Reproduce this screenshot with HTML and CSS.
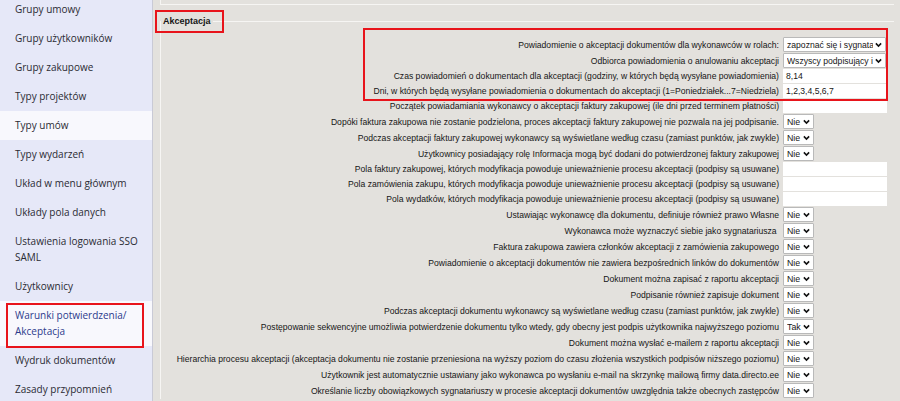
FILE: index.html
```html
<!DOCTYPE html>
<html lang="pl">
<head>
<meta charset="utf-8">
<title>Akceptacja</title>
<link rel="stylesheet" href="styles.css">
</head>
<body>
<div class="app">
  <nav class="side">
    <a class="side-item">Grupy umowy</a>
    <a class="side-item">Grupy użytkowników</a>
    <a class="side-item">Grupy zakupowe</a>
    <a class="side-item">Typy projektów</a>
    <a class="side-item is-hover">Typy umów</a>
    <a class="side-item">Typy wydarzeń</a>
    <a class="side-item">Układ w menu głównym</a>
    <a class="side-item">Układy pola danych</a>
    <a class="side-item">Ustawienia logowania SSO SAML</a>
    <a class="side-item">Użytkownicy</a>
    <a class="side-item is-active">Warunki potwierdzenia/ Akceptacja</a>
    <a class="side-item">Wydruk dokumentów</a>
    <a class="side-item">Zasady przypomnień</a>
  </nav>
  <main class="content">
    <div class="prev-box"></div>
    <fieldset class="group">
      <legend class="group-title"><span class="marked">Akceptacja</span></legend>
      <div class="mark-box"></div>
      <table class="settings">
        <tr><td class="lbl">Powiadomienie o akceptacji dokumentów dla wykonawców w rolach:</td><td class="ctl"><span class="sel wide"><span class="val">zapoznać się i sygnata</span><svg class="chev" viewBox="0 0 8 6"><path d="M1 1.2 L4 4.2 L7 1.2"/></svg></span></td></tr>
        <tr><td class="lbl">Odbiorca powiadomienia o anulowaniu akceptacji</td><td class="ctl"><span class="sel wide"><span class="val">Wszyscy podpisujący i</span><svg class="chev" viewBox="0 0 8 6"><path d="M1 1.2 L4 4.2 L7 1.2"/></svg></span></td></tr>
        <tr><td class="lbl">Czas powiadomień o dokumentach dla akceptacji (godziny, w których będą wysyłane powiadomienia)</td><td class="ctl"><span class="txt">8,14</span></td></tr>
        <tr><td class="lbl">Dni, w których będą wysyłane powiadomienia o dokumentach do akceptacji (1=Poniedziałek...7=Niedziela)</td><td class="ctl"><span class="txt">1,2,3,4,5,6,7</span></td></tr>
        <tr><td class="lbl">Początek powiadamiania wykonawcy o akceptacji faktury zakupowej (ile dni przed terminem płatności)</td><td class="ctl"><span class="txt"></span></td></tr>
        <tr><td class="lbl">Dopóki faktura zakupowa nie zostanie podzielona, proces akceptacji faktury zakupowej nie pozwala na jej podpisanie.</td><td class="ctl"><span class="sel"><span class="val">Nie</span><svg class="chev" viewBox="0 0 8 6"><path d="M1 1.2 L4 4.2 L7 1.2"/></svg></span></td></tr>
        <tr><td class="lbl">Podczas akceptacji faktury zakupowej wykonawcy są wyświetlane według czasu (zamiast punktów, jak zwykle)</td><td class="ctl"><span class="sel"><span class="val">Nie</span><svg class="chev" viewBox="0 0 8 6"><path d="M1 1.2 L4 4.2 L7 1.2"/></svg></span></td></tr>
        <tr><td class="lbl">Użytkownicy posiadający rolę Informacja mogą być dodani do potwierdzonej faktury zakupowej</td><td class="ctl"><span class="sel"><span class="val">Nie</span><svg class="chev" viewBox="0 0 8 6"><path d="M1 1.2 L4 4.2 L7 1.2"/></svg></span></td></tr>
        <tr><td class="lbl">Pola faktury zakupowej, których modyfikacja powoduje unieważnienie procesu akceptacji (podpisy są usuwane)</td><td class="ctl"><span class="txt"></span></td></tr>
        <tr><td class="lbl">Pola zamówienia zakupu, których modyfikacja powoduje unieważnienie procesu akceptacji (podpisy są usuwane)</td><td class="ctl"><span class="txt"></span></td></tr>
        <tr><td class="lbl">Pola wydatków, których modyfikacja powoduje unieważnienie procesu akceptacji (podpisy są usuwane)</td><td class="ctl"><span class="txt"></span></td></tr>
        <tr><td class="lbl">Ustawiając wykonawcę dla dokumentu, definiuje również prawo Własne</td><td class="ctl"><span class="sel"><span class="val">Nie</span><svg class="chev" viewBox="0 0 8 6"><path d="M1 1.2 L4 4.2 L7 1.2"/></svg></span></td></tr>
        <tr><td class="lbl">Wykonawca może wyznaczyć siebie jako sygnatariusza&nbsp;</td><td class="ctl"><span class="sel"><span class="val">Nie</span><svg class="chev" viewBox="0 0 8 6"><path d="M1 1.2 L4 4.2 L7 1.2"/></svg></span></td></tr>
        <tr><td class="lbl">Faktura zakupowa zawiera członków akceptacji z zamówienia zakupowego</td><td class="ctl"><span class="sel"><span class="val">Nie</span><svg class="chev" viewBox="0 0 8 6"><path d="M1 1.2 L4 4.2 L7 1.2"/></svg></span></td></tr>
        <tr><td class="lbl">Powiadomienie o akceptacji dokumentów nie zawiera bezpośrednich linków do dokumentów</td><td class="ctl"><span class="sel"><span class="val">Nie</span><svg class="chev" viewBox="0 0 8 6"><path d="M1 1.2 L4 4.2 L7 1.2"/></svg></span></td></tr>
        <tr><td class="lbl">Dokument można zapisać z raportu akceptacji</td><td class="ctl"><span class="sel"><span class="val">Nie</span><svg class="chev" viewBox="0 0 8 6"><path d="M1 1.2 L4 4.2 L7 1.2"/></svg></span></td></tr>
        <tr><td class="lbl">Podpisanie również zapisuje dokument</td><td class="ctl"><span class="sel"><span class="val">Nie</span><svg class="chev" viewBox="0 0 8 6"><path d="M1 1.2 L4 4.2 L7 1.2"/></svg></span></td></tr>
        <tr><td class="lbl">Podczas akceptacji dokumentu wykonawcy są wyświetlane według czasu (zamiast punktów, jak zwykle)</td><td class="ctl"><span class="sel"><span class="val">Nie</span><svg class="chev" viewBox="0 0 8 6"><path d="M1 1.2 L4 4.2 L7 1.2"/></svg></span></td></tr>
        <tr><td class="lbl">Postępowanie sekwencyjne umożliwia potwierdzenie dokumentu tylko wtedy, gdy obecny jest podpis użytkownika najwyższego poziomu</td><td class="ctl"><span class="sel"><span class="val">Tak</span><svg class="chev" viewBox="0 0 8 6"><path d="M1 1.2 L4 4.2 L7 1.2"/></svg></span></td></tr>
        <tr><td class="lbl">Dokument można wysłać e-mailem z raportu akceptacji</td><td class="ctl"><span class="sel"><span class="val">Nie</span><svg class="chev" viewBox="0 0 8 6"><path d="M1 1.2 L4 4.2 L7 1.2"/></svg></span></td></tr>
        <tr><td class="lbl">Hierarchia procesu akceptacji (akceptacja dokumentu nie zostanie przeniesiona na wyższy poziom do czasu złożenia wszystkich podpisów niższego poziomu)</td><td class="ctl"><span class="sel"><span class="val">Nie</span><svg class="chev" viewBox="0 0 8 6"><path d="M1 1.2 L4 4.2 L7 1.2"/></svg></span></td></tr>
        <tr><td class="lbl">Użytkownik jest automatycznie ustawiany jako wykonawca po wysłaniu e-mail na skrzynkę mailową firmy data.directo.ee</td><td class="ctl"><span class="sel"><span class="val">Nie</span><svg class="chev" viewBox="0 0 8 6"><path d="M1 1.2 L4 4.2 L7 1.2"/></svg></span></td></tr>
        <tr><td class="lbl">Określanie liczby obowiązkowych sygnatariuszy w procesie akceptacji dokumentów uwzględnia także obecnych zastępców</td><td class="ctl"><span class="sel"><span class="val">Nie</span><svg class="chev" viewBox="0 0 8 6"><path d="M1 1.2 L4 4.2 L7 1.2"/></svg></span></td></tr>
      </table>
    </fieldset>
  </main>
</div>
</body>
</html>
```
FILE: styles.css
```css
html, body {
  margin: 0;
  padding: 0;
  height: 100%;
  overflow: hidden;
}

body {
  background: #e3e1dd;
}

.app {
  display: flex;
  height: 100%;
}

/* left navigation, scrolled a few pixels down */
.side {
  width: 152px;
  flex: none;
  margin-top: -5px;
  background: #e6e8f8;
  border-right: 1px solid #c9cad6;
  display: flex;
  flex-direction: column;
  font-family: "Open Sans", "Noto Sans", sans-serif;
  font-size: 10px;
  color: #2b2b33;
}

.side-item {
  position: relative;
  display: block;
  padding: 6px 8px 7px 15px;
  line-height: 16px;
}

.side-item.is-hover {
  background: #f8f8fd;
}

.side-item.is-active {
  background: #f8f8fd;
  color: #2c3a8c;
}

.side-item.is-active::after {
  content: "";
  position: absolute;
  left: 6px;
  right: 8px;
  top: 2px;
  bottom: -2px;
  border: 2px solid #e8141b;
}

/* settings area */
.content {
  flex: 1;
  min-width: 0;
  padding: 0 6px 0 7px;
  font-family: "Liberation Sans", Arial, sans-serif;
  font-size: 8.6px;
  color: #161616;
}

.prev-box {
  height: 4px;
  border-left: 1px solid #f6f5f3;
  border-bottom: 1px solid #f6f5f3;
}

.group {
  position: relative;
  margin: 10px 0 0;
  padding: 9px 2px 0 10px;
  border: 1px solid #f6f5f3;
  border-right: none;
  border-bottom: none;
}

.group-title {
  padding: 0 2px;
  margin-left: -10px;
  font-weight: bold;
  font-size: 9px;
  line-height: 12px;
}

.marked {
  position: relative;
}

.marked::after {
  content: "";
  position: absolute;
  left: -8px;
  right: -13px;
  top: -6px;
  bottom: -7px;
  border: 2px solid #e8141b;
}

/* frame drawn over the four notification rows */
.mark-box {
  position: absolute;
  left: 202px;
  top: 1px;
  width: 521px;
  height: 69px;
  border: 2px solid #e8141b;
  pointer-events: none;
}

.settings {
  width: 100%;
  border-collapse: separate;
  border-spacing: 0 1px;
}

.settings td {
  padding: 0;
  vertical-align: middle;
}

.settings td.lbl {
  text-align: right;
  padding-right: 4px;
  white-space: nowrap;
}

.settings td.ctl {
  width: 109px;
}

.txt {
  display: block;
  width: 104px;
  height: 14px;
  line-height: 14px;
  background: #fff;
  padding-left: 3px;
  box-sizing: border-box;
  font-size: 8.6px;
}

.sel {
  display: flex;
  align-items: center;
  box-sizing: border-box;
  height: 15px;
  width: 31px;
  padding: 0 3px;
  background: #fff;
  border: 1px solid #b9b9b9;
  border-radius: 1px;
  font-size: 8.8px;
  white-space: nowrap;
}

.sel.wide {
  width: 103px;
  font-size: 8.6px;
}

.val {
  flex: 1;
  min-width: 0;
  overflow: hidden;
}

.chev {
  width: 7px;
  height: 6px;
  flex: none;
  margin-left: 2px;
  fill: none;
  stroke: #111;
  stroke-width: 1.8;
}
```
